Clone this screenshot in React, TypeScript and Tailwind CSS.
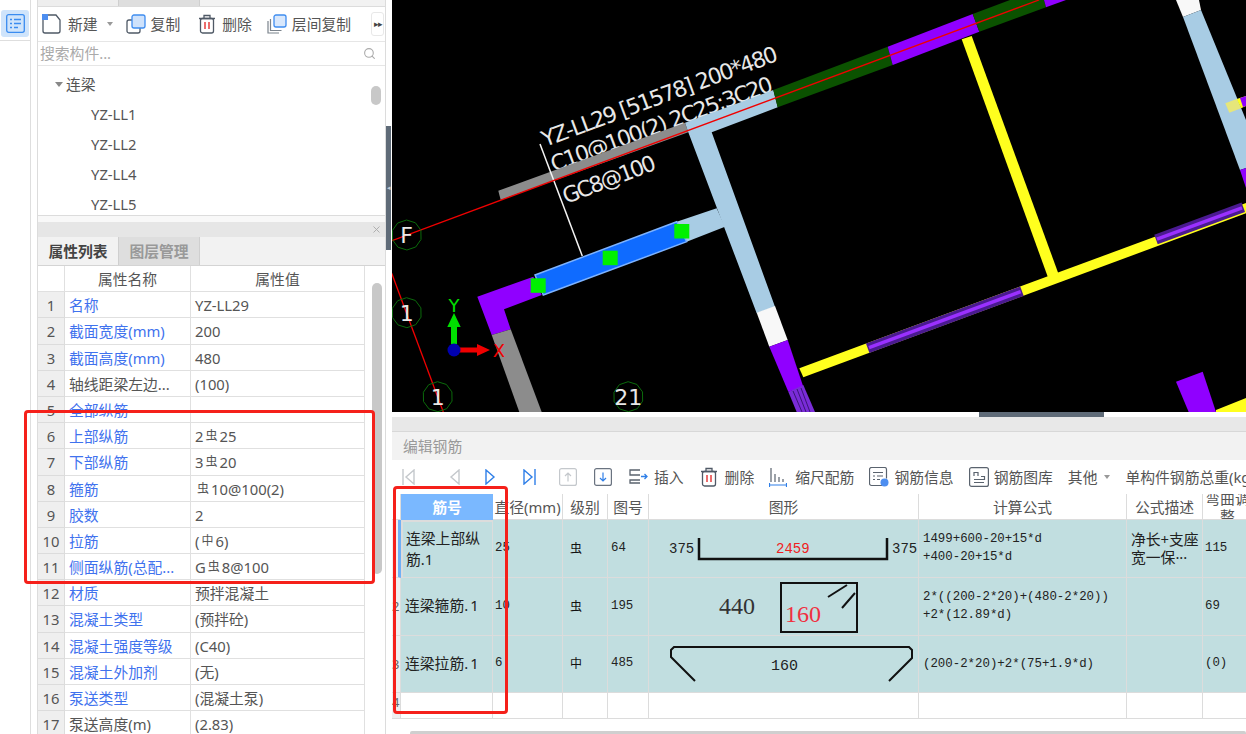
import { Search, X } from "lucide-react";

const rows: [string, React.ReactNode, boolean][] = [
  ["名称", "YZ-LL29", true],
  ["截面宽度(mm)", "200", true],
  ["截面高度(mm)", "480", true],
  ["轴线距梁左边...", "(100)", false],
  ["全部纵筋", "", true],
  ["上部纵筋", <>2<Sym />25</>, true],
  ["下部纵筋", <>3<Sym />20</>, true],
  ["箍筋", <><Sym />10@100(2)</>, true],
  ["胶数", "2", true],
  ["拉筋", <>(<Sym c="中" />6)</>, true],
  ["侧面纵筋(总配...", <>G<Sym />8@100</>, true],
  ["材质", "预拌混凝土", true],
  ["混凝土类型", "(预拌砼)", true],
  ["混凝土强度等级", "(C40)", true],
  ["混凝土外加剂", "(无)", true],
  ["泵送类型", "(混凝土泵)", true],
  ["泵送高度(m)", "(2.83)", false],
];

function Sym({ c = "虫" }: { c?: string }) {
  return <span className="text-[12px] align-[4px] mx-[2px]">{c}</span>;
}

function Poly({ p, c }: { p: string; c: string }) {
  return <polygon points={p} fill={c} />;
}

function Axis({ x, y, t }: { x: number; y: number; t: string }) {
  const pts = Array.from({ length: 10 }, (_, i) => {
    const a = (i * Math.PI) / 5 + 0.3;
    return `${x + 15 * Math.cos(a)},${y + 15 * Math.sin(a)}`;
  }).join(" ");
  return (
    <g>
      <polygon points={pts} fill="none" stroke="#0b6b0b" strokeWidth="1" />
      <text x={x} y={y + 8} textAnchor="middle" fontSize="22" fill="#e8e8e8" fontFamily="DejaVu Sans">{t}</text>
    </g>
  );
}

function Canvas() {
  return (
    <svg viewBox="392 0 854 412" className="block w-[854px] h-[412px] bg-black shrink-0">
      <g fontFamily="DejaVu Sans" fontSize="22" fill="#e8e8e8">
        <text transform="translate(545 147) rotate(-20.300)" textLength="250">YZ-LL29 [51578] 200*480</text>
        <text transform="translate(554 172) rotate(-20.300)" textLength="235">C10@100(2) 2C25;3C20</text>
        <text transform="translate(566 204) rotate(-21)" textLength="98">GC8@100</text>
      </g>
      <Poly c="#8c8c8c" p="498.3,190.7 500.7,200 688.3,132.3 685,122.7" />
      <Poly c="#a8cce4" p="685,122.7 773.3,90 777.7,107.3 711.7,132.3 775,306.7 756.7,313.3 688.3,132.3" />
      <Poly c="#0b5200" p="773.3,90 887.7,46.7 892.7,65 777.7,107.3" />
      <Poly c="#9000ff" p="887.7,46.7 972.7,14 979.3,31.7 892.7,65" />
      <Poly c="#0b5200" p="972.7,14 1010,0 1044,0 1046,7.3 979.3,31.7" />
      <Poly c="#9000ff" p="1044,0 1066,0 1046,7.3" />
      <Poly c="#f8f8f8" p="756.7,312.7 775,306 787.7,340 769.3,346.7" />
      <Poly c="#9000ff" p="769.3,346.7 787.7,340 803.3,386.7 788.3,391.7" />
      <Poly c="#7a2cd8" p="788.3,391.7 803.3,385 815,412 796.7,412" />
      <path d="M793 391 L802 412 M797 389 L806 412 M801 388 L810 412" stroke="#3c1478" strokeWidth="1" />
      <Poly c="#a8cce4" p="676.7,221.7 716.7,208.3 725,226.7 686.7,241.7" />
      <Poly c="#9000ff" p="477.3,296.7 533.3,276.7 541.7,295 504,309.3 510.7,329.3 491.7,335" />
      <Poly c="#8c8c8c" p="491.7,335 510.7,329.3 541.7,412 519.3,412" />
      <polygon points="535,275 676.7,221.7 686.7,241.7 543.3,295" fill="#0f6bff" stroke="#7db3ff" strokeWidth="1.5" />
      <rect x="530.7" y="278.3" width="15" height="14.5" fill="#00f000" />
      <rect x="602.7" y="250.7" width="15" height="14.5" fill="#00f000" />
      <rect x="674.3" y="224" width="15" height="14.5" fill="#00f000" />
      <line x1="540" y1="144" x2="582.3" y2="256" stroke="#f4f4f4" strokeWidth="1.5" />

      <Poly c="#ffff1e" p="961.7,39.3 971.7,36 1060,278 1050,283" />
      <Poly c="#ffff1e" p="799.3,368.3 1246,203 1246,213.3 803.3,377.3" />
      <line x1="867.7" y1="348.200" x2="1022" y2="291.200" stroke="#4a1a90" strokeWidth="10" />
      <line x1="869" y1="347.700" x2="1020.7" y2="291.700" stroke="#9a30ff" strokeWidth="3.500" />
      <line x1="1156" y1="239.500" x2="1243.3" y2="207.300" stroke="#4a1a90" strokeWidth="10" />
      <line x1="1157" y1="239.100" x2="1242" y2="207.800" stroke="#9a30ff" strokeWidth="3.500" />
      <Poly c="#f8f8f8" p="1176,0 1199,0 1201,10 1183,17" />
      <Poly c="#a8cce4" p="1183,17 1201,10 1246,120 1246,168 1240,170" />
      <Poly c="#9000ff" p="1240,170 1246,168 1246,188" />
      <Poly c="#e6e67a" p="1225.3,103.3 1236.7,99 1241,108.3 1229.3,112.7" />
      <Poly c="#ffff1e" p="1236.7,99 1246,96 1246,106 1241,108.3" />
      <Poly c="#9000ff" p="1240,98 1246,96 1246,106 1243,107" />
      <Poly c="#9000ff" p="1176,381.7 1202.7,371.7 1216,412 1188.7,412" />
      <Poly c="#ffff1e" p="1216,410 1246,398 1246,412 1216,412" />

      <line x1="392" y1="240.7" x2="1039" y2="0" stroke="#f00000" strokeWidth="1.300" />
      <line x1="391.7" y1="273.3" x2="443.3" y2="412" stroke="#f00000" strokeWidth="1.300" />
      <Axis x={406.7} y={235} t="F" />
      <Axis x={406.7} y={312.7} t="1" />
      <Axis x={437.7} y={396.7} t="1" />
      <Axis x={628.3} y={396.7} t="21" />

      <polygon points="451,327 457,327 457,344 451,344" fill="#00e000" />
      <polygon points="447.3,327 460.7,327 454,313" fill="#00e000" />
      <polygon points="458,347.5 477,347.5 477,344 490,350 477,356 477,352.5 458,352.5" fill="#f00000" />
      <circle cx="454" cy="350" r="6.5" fill="#0000b0" />
      <text x="454" y="312" textAnchor="middle" fontSize="18" fill="#00e000" fontFamily="DejaVu Sans">Y</text>
      <text x="499" y="357" textAnchor="middle" fontSize="18" fill="#f00000" fontFamily="DejaVu Sans">X</text>
    </svg>
  );
}

function ToolIcon({ kind }: { kind: string }) {
  if (kind === "new")
    return (
      <svg width="20" height="20" viewBox="0 0 20 20" fill="none" stroke="#4f5966" strokeWidth="1.3">
        <path d="M1 5v12a2 2 0 0 0 2 2h13a2 2 0 0 0 2-2V6l-4-5H6" />
        <rect x="0" y="0" width="6" height="6" fill="#4d8ef0" stroke="none" />
      </svg>
    );
  if (kind === "copy")
    return (
      <svg width="20" height="20" viewBox="0 0 20 20" fill="none" stroke="#4f5966" strokeWidth="1.3">
        <rect x="1" y="6" width="13" height="13" rx="2" />
        <rect x="6" y="1" width="13" height="13" rx="2" fill="#cfe2fb" stroke="#3f8df0" />
      </svg>
    );
  if (kind === "trash")
    return (
      <svg width="18" height="20" viewBox="0 0 18 20" fill="none" stroke="#4f5966" strokeWidth="1.3">
        <path d="M1 4.5h16M6 4.5V1.5h6v3" />
        <rect x="2.5" y="4.5" width="13" height="14.5" rx="2" />
        <path d="M7 8v7M11 8v7" stroke="#e02020" />
      </svg>
    );
  return (
    <svg width="20" height="20" viewBox="0 0 20 20" fill="none" stroke="#7b838c" strokeWidth="1.2">
      <path d="M1 7v12h11M3.500 5v11.500h11" />
      <rect x="7" y="1" width="12" height="12" rx="2" fill="#d9e8fc" stroke="#3f8df0" strokeWidth="1.3" />
    </svg>
  );
}

function EditIcon({ kind }: { kind: string }) {
  if (kind === "first" || kind === "prev" || kind === "next" || kind === "last") {
    const on = kind === "next" || kind === "last";
    const col = on ? "#2f7fe8" : "#c4c8cc";
    return (
      <svg width="13" height="16" viewBox="0 0 13 16" fill="none" stroke={col} strokeWidth="1.4">
        {kind === "first" && <path d="M1 0v16M12 1 4 8l8 7z" />}
        {kind === "prev" && <path d="M10 1 2 8l8 7z" />}
        {kind === "next" && <path d="M2 1l8 7-8 7z" />}
        {kind === "last" && <path d="M1 1l8 7-8 7zM12 0v16" />}
      </svg>
    );
  }
  if (kind === "up")
    return (
      <svg width="18" height="18" viewBox="0 0 18 18" fill="none" stroke="#c4c8cc" strokeWidth="1.2">
        <rect x="0.600" y="0.600" width="16.800" height="16.800" rx="2" />
        <path d="M9 13.500V5M6 8l3-3 3 3" />
      </svg>
    );
  if (kind === "down")
    return (
      <svg width="18" height="18" viewBox="0 0 18 18" fill="none" stroke="#6a7380" strokeWidth="1.2">
        <rect x="0.600" y="0.600" width="16.800" height="16.800" rx="2" />
        <path d="M9 4.500V13M6 10l3 3 3-3" stroke="#2f7fe8" />
      </svg>
    );
  if (kind === "insert")
    return (
      <svg width="19" height="16" viewBox="0 0 19 16" fill="none" stroke="#5a636e" strokeWidth="1.3">
        <path d="M11 1H1v5h10M11 11H1v3h10" />
        <path d="M12 7.500h6M15.500 5l2.500 2.500-2.500 2.500" stroke="#2f7fe8" />
      </svg>
    );
  if (kind === "scale")
    return (
      <svg width="18" height="20" viewBox="0 0 18 20" fill="none" stroke="#5a636e" strokeWidth="1.2">
        <path d="M2 1v14M6 7v8M10 10v5M14 12v3" />
        <path d="M0.500 18h17M0.500 16v4M17.500 16v4" stroke="#2f7fe8" />
      </svg>
    );
  if (kind === "info")
    return (
      <svg width="20" height="20" viewBox="0 0 20 20" fill="none" stroke="#5a636e" strokeWidth="1.2">
        <path d="M13 18.500H2.500a2 2 0 0 1-2-2v-14a2 2 0 0 1 2-2h13a2 2 0 0 1 2 2v9" />
        <path d="M4 5.500h10M4 9h2M8 9h6M4 12.500h2M8 12.500h3" />
        <circle cx="15.500" cy="15.500" r="4" fill="#4d8ef0" stroke="none" />
      </svg>
    );
  return (
    <svg width="20" height="20" viewBox="0 0 20 20" fill="none" stroke="#5a636e" strokeWidth="1.2">
      <rect x="0.600" y="0.600" width="18.800" height="18.800" rx="2" />
      <path d="M5 9V5.500h4V9M12 9.500h3.500v3H5M5 15.500h10" />
    </svg>
  );
}

const cell = "border-r border-b border-[#dcdcdc] overflow-hidden";
const mono = "font-['Liberation_Mono',monospace] text-[12.4px] leading-[18px] text-[#222]";
const rowCell = `${cell} bg-[#c1dee0] flex items-center`;
const sm = "pl-[2px] font-['Liberation_Mono',monospace] text-[12.4px] text-[#222]";

function RebarRow({ no, name, dia, sym, fig, shape, formula, desc, adj, sel }: {
  no: string; name: React.ReactNode; dia: string; sym: string; fig: string; shape: React.ReactNode;
  formula: React.ReactNode; desc?: React.ReactNode; adj: string; sel?: boolean;
}) {
  return (
    <>
      <div className={`${cell} bg-[#efefef] text-[13px] text-[#666] leading-[56px] ${sel ? "border-r-[3px] border-r-[#6fb0f5]" : ""}`}>{no}</div>
      <div className={`${rowCell} text-[14.800px] leading-[21px] text-[#222] pb-[2px] ${sel ? "border-2 border-[#8a8f90] pl-[3px]" : "pl-[4px]"}`}>{name}</div>
      <div className={rowCell + " pb-[1px] " + sm}>{dia}</div>
      <div className={`${rowCell} pl-[7px] text-[12px] text-[#111]`}>{sym}</div>
      <div className={rowCell + " pl-[3px] pb-[1px] " + sm}>{fig}</div>
      <div className={`${cell} bg-[#c1dee0]`}>{shape}</div>
      <div className={`${rowCell} pl-[4px] pb-[1px] ${mono}`}><div>{formula}</div></div>
      <div className={`${rowCell} pl-[4px] text-[14.800px] leading-[18px] text-[#222] pb-[2px]`}>{desc}</div>
      <div className={rowCell + " pl-[2px] pb-[1px] " + sm}>{adj}</div>
    </>
  );
}

export default function App() {
  const head = `${cell} bg-white flex items-center justify-center text-[14.800px] text-[#555] pt-[1px]`;
  return (
    <div className="relative flex w-[1246px] h-[734px] overflow-hidden bg-white font-['Noto_Sans','Noto_Sans_CJK_SC',sans-serif]">
      {/* left rail */}
      <div className="w-[31px] shrink-0 border-r border-[#dedede] bg-white">
        <div className="h-[41px] border-b border-[#dedede] pt-[10px] pl-[1px]">
          <div className="w-[28px] h-[27px] rounded-[3px] bg-[#cfe4fb] flex items-center justify-center">
            <svg width="19" height="19" viewBox="0 0 19 19" fill="none" stroke="#3a8cf0" strokeWidth="1.300">
              <rect x="0.700" y="0.700" width="17.600" height="17.600" rx="2" />
              <path d="M4 5.500h2M8 5.500h7M4 9.500h2M8 9.500h7M4 13.500h2M8 13.500h4" />
            </svg>
          </div>
        </div>
      </div>
      <div className="w-[6px] shrink-0 bg-white" />

      {/* component & property panels */}
      <div className="w-[349px] shrink-0 flex flex-col border-l border-r border-[#dcdcdc] text-[14.800px] text-[#555]">
        <div className="h-[7px] flex bg-[#f2f2f2] border-b border-[#dcdcdc]">
          <div className="w-[81px] bg-[#eeeeee] border-r border-[#cfcfcf]" />
          <div className="w-[81px] bg-[#dedede] border-r border-[#cfcfcf]" />
        </div>
        <div className="h-[35px] flex items-center border-b border-[#e6e6e6] pl-[4px]">
          <ToolIcon kind="new" />
          <span className="ml-[6px]">新建</span>
          <span className="ml-[9px] w-0 h-0 border-x-[3px] border-x-transparent border-t-[4px] border-t-[#999]" />
          <span className="ml-[13px] flex"><ToolIcon kind="copy" /></span>
          <span className="ml-[5px]">复制</span>
          <span className="ml-[18px] flex"><ToolIcon kind="trash" /></span>
          <span className="ml-[6px]">删除</span>
          <span className="ml-[15px] flex"><ToolIcon kind="layer" /></span>
          <span className="ml-[5px]">层间复制</span>
          <span className="ml-[20px] w-[13px] h-[24px] border border-[#e8e8e8] rounded-[3px] flex items-center justify-center text-[9px] text-[#444] tracking-[-1px]">▸▸</span>
        </div>
        <div className="h-[24px] flex items-center justify-between border-b border-[#e6e6e6] pl-[2px] pr-[9px] text-[#aaaaaa]">
          <span>搜索构件...</span>
          <Search size={13} strokeWidth={2} className="text-[#aaaaaa]" />
        </div>
        <div className="h-[150px] relative pt-[3px] border-b border-[#dcdcdc] overflow-hidden">
          <div className="h-[30px] flex items-center pl-[17px]">
            <span className="w-0 h-0 border-x-[4px] border-x-transparent border-t-[5px] border-t-[#888]" />
            <span className="ml-[3px]">连梁</span>
          </div>
          {["YZ-LL1", "YZ-LL2", "YZ-LL4", "YZ-LL5"].map(t => (
            <div key={t} className="h-[30px] flex items-center pl-[53px]">{t}</div>
          ))}
          <div className="absolute right-[4px] top-[20px] w-[10px] h-[19px] rounded-full bg-[#c8c8c8]" />
        </div>
        <div className="h-[6px] bg-[#f8f8f8]" />
        <div className="h-[15px] bg-[#e6e6e6] flex items-center justify-end pr-[3px]">
          <X size={11} className="text-[#aaaaaa]" />
        </div>
        <div className="h-[29px] flex bg-[#f2f2f2] border-b border-[#d4d4d4]">
          <div className="w-[81px] flex items-center justify-center border-r border-[#cfcfcf] font-bold text-[#444]">属性列表</div>
          <div className="w-[81px] flex items-center justify-center border-r border-[#cfcfcf] bg-[#dedede] font-bold text-[#999]">图层管理</div>
        </div>
        <div className="relative flex-1 overflow-hidden">
          <div className="w-[327px] grid grid-cols-[27px_126px_174px] auto-rows-[26.200px]">
            <div className="border-r border-b border-[#e0e0e0]" />
            <div className="border-r border-b border-[#e0e0e0] flex items-center justify-center pt-[1px]">属性名称</div>
            <div className="border-r border-b border-[#e0e0e0] flex items-center justify-center pt-[1px]">属性值</div>
            {rows.map(([k, v, blue], i) => (
              <div key={i} className="contents">
                <div className="bg-[#efefef] border-r border-b border-[#dcdcdc] flex items-center justify-center text-[#555] pt-[1px]">{i + 1}</div>
                <div className={`border-r border-b border-[#e0e0e0] flex items-center pl-[4px] pt-[1px] whitespace-nowrap overflow-hidden ${blue ? "text-[#3f72ee]" : "text-[#555]"}`}>{k}</div>
                <div className="border-r border-b border-[#e0e0e0] flex items-center pl-[4px] pt-[1px] whitespace-nowrap">{v}</div>
              </div>
            ))}
          </div>
          <div className="absolute left-[334px] top-[17px] w-[10px] h-[291px] rounded-full bg-[#c8c8c8]" />
        </div>
      </div>

      {/* splitter */}
      <div className="w-[5px] shrink-0 bg-white flex flex-col">
        <div className="mt-[126px] h-[124px] bg-[#5f6b78] flex items-center justify-center text-[7px] text-[#c5ccd4]">◂</div>
      </div>
      <div className="w-[1px] shrink-0 bg-white" />

      {/* drawing + rebar editor */}
      <div className="w-[854px] shrink-0 flex flex-col">
        <Canvas />
        <div className="h-[5px] shrink-0 bg-white flex">
          <div className="ml-[587px] w-[125px] bg-[#5f6b78]" />
        </div>
        <div className="h-[15px] shrink-0 bg-[#e8e8e8] border-b border-[#d8d8d8]" />
        <div className="h-[28px] shrink-0 bg-[#f2f2f2] flex items-center pl-[11px] text-[14.800px] text-[#999]">编辑钢筋</div>
        <div className="h-[34px] shrink-0 bg-white flex items-center text-[14.800px] text-[#555] whitespace-nowrap overflow-hidden">
          <span className="ml-[10px] flex"><EditIcon kind="first" /></span>
          <span className="ml-[34px] flex"><EditIcon kind="prev" /></span>
          <span className="ml-[22px] flex"><EditIcon kind="next" /></span>
          <span className="ml-[26px] flex"><EditIcon kind="last" /></span>
          <span className="ml-[23px] flex"><EditIcon kind="up" /></span>
          <span className="ml-[17px] flex"><EditIcon kind="down" /></span>
          <span className="ml-[17px] flex"><EditIcon kind="insert" /></span>
          <span className="ml-[6px]">插入</span>
          <span className="ml-[16px] flex"><ToolIcon kind="trash" /></span>
          <span className="ml-[7px]">删除</span>
          <span className="ml-[15px] flex"><EditIcon kind="scale" /></span>
          <span className="ml-[8px]">缩尺配筋</span>
          <span className="ml-[15px] flex"><EditIcon kind="info" /></span>
          <span className="ml-[5px]">钢筋信息</span>
          <span className="ml-[15px] flex"><EditIcon kind="lib" /></span>
          <span className="ml-[5px]">钢筋图库</span>
          <span className="ml-[15px]">其他</span>
          <span className="ml-[7px] w-0 h-0 border-x-[3px] border-x-transparent border-t-[4px] border-t-[#999]" />
          <span className="ml-[15px]">单构件钢筋总重(kg)：</span>
        </div>
        <div className="w-[854px] grid grid-cols-[9px_92px_70px_45px_41px_270px_208px_76px_50px] grid-rows-[26px_58px_58px_57px_26px] overflow-hidden">
          <div className={`${cell} bg-white`} />
          <div className="bg-[#7ab8ff] text-white flex items-center justify-center font-bold text-[14.800px]">筋号</div>
          <div className={`${head} whitespace-nowrap`}>直径(mm)</div>
          <div className={head}>级别</div>
          <div className={head}>图号</div>
          <div className={head}>图形</div>
          <div className={head}>计算公式</div>
          <div className={head}>公式描述</div>
          <div className={`${head} leading-[18px] text-center`}>弯曲调整</div>

          <RebarRow
            sel no="" name={<div>连梁上部纵<br />筋.1</div>} dia="25" sym="虫" fig="64"
            shape={
              <svg width="269" height="57" viewBox="648 520 269 57" className="block">
                <path d="M698 538V559H886V538" fill="none" stroke="#111" strokeWidth="2.500" />
                <g fontFamily="Liberation Mono" fontSize="14">
                  <text x="668" y="553" fill="#222">375</text>
                  <text x="775" y="553" fill="#f02020">2459</text>
                  <text x="891" y="553" fill="#222">375</text>
                </g>
              </svg>
            }
            formula={<>1499+600-20+15*d<br />+400-20+15*d</>}
            desc={<div>净长+支座<br />宽一保···</div>} adj="115"
          />
          <RebarRow
            no="2" name={<>连梁箍筋<span className="tracking-[2px]">.1</span></>} dia="10" sym="虫" fig="195"
            shape={
              <svg width="269" height="57" viewBox="648 578 269 57" className="block">
                <rect x="780" y="583" width="76" height="49" fill="none" stroke="#111" strokeWidth="2" />
                <path d="M827 597L846 585M841 608L854 593" stroke="#111" strokeWidth="2" />
                <text x="718" y="614" fontFamily="Liberation Serif" fontSize="24" fill="#333">440</text>
                <text x="784" y="622" fontFamily="Liberation Serif" fontSize="24" fill="#f03040">160</text>
              </svg>
            }
            formula={<>2*((200-2*20)+(480-2*20))<br />+2*(12.89*d)</>} adj="69"
          />
          <RebarRow
            no="3" name={<>连梁拉筋<span className="tracking-[2px]">.1</span></>} dia="6" sym="中" fig="485"
            shape={
              <svg width="269" height="56" viewBox="648 636 269 56" className="block">
                <path d="M694 681L670 657V650L673 647H908L911 650V658L888 681" fill="none" stroke="#111" strokeWidth="2" />
                <text x="770" y="670" fontFamily="Liberation Mono" fontSize="15" fill="#222">160</text>
              </svg>
            }
            formula="(200-2*20)+2*(75+1.9*d)" adj=" (0)"
          />
          <div className={`${cell} bg-[#efefef] text-[13px] text-[#666]`}>4</div>
          {[0, 1, 2, 3, 4, 5, 6, 7].map(i => <div key={i} className={`${cell} bg-white`} />)}
        </div>
        <div className="flex-1 bg-white" />
      </div>

      {/* annotations drawn over the screenshot */}
      <div className="absolute left-[24px] top-[410px] w-[351px] h-[174px] border-[3px] border-[#f5201a] rounded-[4px]" />
      <div className="absolute left-[393px] top-[486px] w-[115px] h-[228px] border-[3px] border-[#f5201a] rounded-[4px]" />
      <div className="absolute left-[410px] bottom-0 w-[836px] h-[3px] bg-[#cfcfcf] rounded-t-[2px]" />
    </div>
  );
}
